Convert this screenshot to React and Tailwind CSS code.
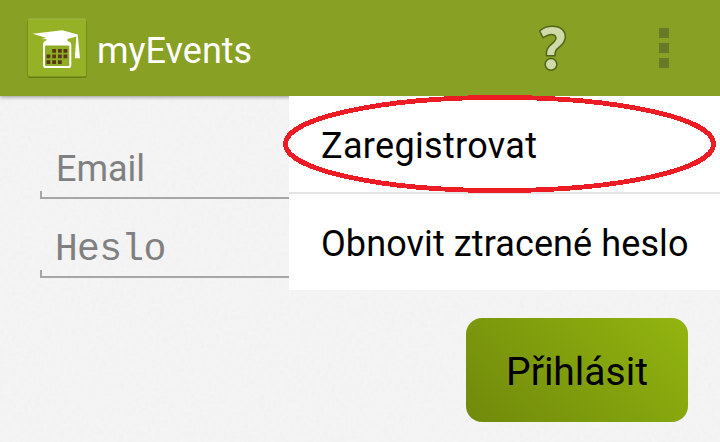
function AppLogo() {
  return (
    <svg className="size-[60px] shrink-0" viewBox="0 0 60 60">
      <rect x="0.5" y="2" width="59" height="58" rx="2" fill="#657d16" />
      <rect x="1" y="1" width="58" height="57.4" rx="1.5" fill="#95b126" />
      <rect x="1.5" y="0.5" width="57" height="1" fill="#a0b94a" />
      <path
        fill="#fff"
        d="M5.500 15.800L35.300 12.300L50.700 16.500L53 40.200H47.800L49.300 18.400L40.500 21V23L43 24L44.300 26V47.200A2.800 2.800 0 0 1 41.500 50H18.800A2.800 2.800 0 0 1 16 47.200V26L17 23.500L19.300 22.500V21L14 21.300L19 19.800Z"
      />
      <rect x="18" y="27.400" width="24.300" height="20.600" rx="1" fill="#90ac26" />
      <path
        fill="#573915"
        d="M25.200 30.900h3.800v3.800h-3.800zM31 30.900h3.800v3.800h-3.800zM36.500 30.900h3.800v3.800h-3.800zM19.500 36.500h3.800v3.800h-3.800zM25.200 36.500h3.800v3.800h-3.800zM31 36.500h3.800v3.800h-3.800zM36.500 36.500h3.800v3.800h-3.800zM19.500 42.200h3.800v3.800h-3.800zM25.200 42.200h3.800v3.800h-3.800zM31 42.200h3.800v3.800h-3.800z"
      />
    </svg>
  );
}

function HelpIcon() {
  return (
    <svg className="h-12 w-8" viewBox="50 41 96 144" fill="#d0daa8" stroke="#50651a" strokeWidth="4.5" strokeLinejoin="round">
      <path d="M58 62C69 52 83 48 97 48C120 48 135 60 135 80C135 95 126 103 116 111C107 118 104 122 104 136H78C77 120 80 112 92 103C102 95 107 90 107 83C107 74 97 71 88 73C80 75 74 79 68 82Z" />
      <circle cx="92" cy="162" r="17.500" />
    </svg>
  );
}

function Field({ label, className }) {
  return (
    <div className="flex h-[79px] flex-col justify-end">
      <div className={"text-[#808080] " + className}>{label}</div>
      <div className="h-2 border-b-2 border-l-2 border-[#a6a6a6]" />
    </div>
  );
}

export default function App() {
  return (
    <div className="relative flex h-[442px] w-[720px] flex-col overflow-hidden bg-[#f5f5f5] font-[Roboto,sans-serif]">
      <svg className="absolute inset-0 size-full opacity-[0.05]">
        <filter id="grain">
          <feTurbulence type="fractalNoise" baseFrequency="0.25" numOctaves="2" />
          <feColorMatrix type="saturate" values="0" />
        </filter>
        <rect width="720" height="442" filter="url(#grain)" />
      </svg>

      <header className="relative flex h-24 shrink-0 items-center bg-[#88a024] pl-[27px] pr-[51px] shadow-[0_1px_4px_rgba(0,0,0,0.4)]">
        <AppLogo />
        <h1 className="ml-[10px] mt-[5px] text-[36px] leading-[48px] text-white">myEvents</h1>
        <div className="ml-auto flex items-center">
          <HelpIcon />
          <div className="ml-[90px] flex flex-col gap-[5px]">
            <span className="size-[10px] bg-[#687a28]" />
            <span className="size-[10px] bg-[#687a28]" />
            <span className="size-[10px] bg-[#687a28]" />
          </div>
        </div>
      </header>

      <main className="relative flex flex-1 flex-col px-8 pt-6">
        <form className="ml-2">
          <Field label="Email" className="h-[43px] pl-4 text-[36px] leading-[43px]" />
          <Field label="Heslo" className="h-[41px] pl-[15px] font-['Liberation_Mono',monospace] text-[38px] leading-[41px] tracking-[-0.7px]" />
        </form>
        <button className="ml-auto mt-10 h-[104px] w-[222px] rounded-2xl bg-linear-45 from-[#70890b] to-[#93b510] pt-[3px] text-[39px] leading-[48px] text-black">
          Přihlásit
        </button>
      </main>

      <div className="absolute left-[289px] top-24 flex h-[194px] w-[431px] flex-col bg-white text-[36px] text-black">
        <div className="h-[98px] border-b-2 border-[#e4e4e4] pl-8 leading-[101px] tracking-[0.33px]">Zaregistrovat</div>
        <div className="h-24 whitespace-nowrap pl-8 leading-[101px] tracking-[0.1px]">Obnovit ztracené heslo</div>
      </div>

      <svg className="pointer-events-none absolute inset-0 size-full" fill="none" stroke="#ed1c24" strokeWidth="4.800" shapeRendering="crispEdges">
        <ellipse cx="499.500" cy="144" rx="214" ry="46.600" />
      </svg>
    </div>
  );
}
